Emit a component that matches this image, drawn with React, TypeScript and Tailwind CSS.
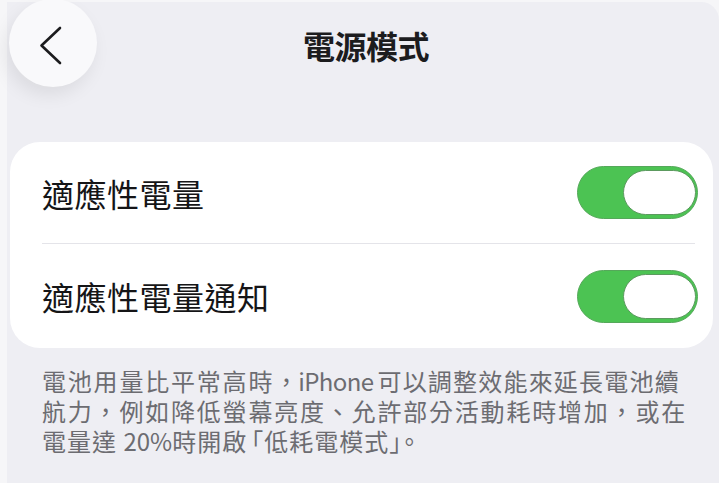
import React from "react";

const Toggle = () => {
  return (
    <div className="w-[121px] h-[53px] rounded-full bg-[#4cc353] border border-[#55a85a] flex items-center justify-end pr-[1px]">
      <div className="w-[73px] h-[45px] rounded-full bg-white border-[1.5px] border-[#5c9a5f]" />
    </div>
  );
};

const Row = ({ label, tall }: { label: string; tall?: boolean }) => {
  return (
    <div
      className={`flex items-center justify-between pl-[32px] pr-[15px] ${
        tall ? "h-[104px]" : "h-[101px]"
      }`}
    >
      <span className="text-[32px] leading-none text-[#151517] tracking-[0.5px]">{label}</span>
      <Toggle />
    </div>
  );
};

const App = () => {
  return (
    <div
      className="w-[719px] h-[483px] bg-[#f6f6f8] overflow-hidden"
      style={{ fontFamily: '"Noto Sans CJK TC", "Noto Sans", sans-serif' }}
    >
      <div className="ml-[7px] mt-[2px] h-[481px] bg-[#eeeef3] rounded-tr-[18px] relative">
        {/* back button sits over the header */}
        <div className="absolute left-[2px] top-[-3px] w-[88px] h-[88px] rounded-full bg-[#f9f9fb] shadow-[-4px_8px_18px_rgba(0,0,0,0.08)] flex items-center justify-center">
          <svg width="88" height="88" viewBox="0 0 88 88" fill="none">
            <path
              d="M51 29 L32.5 46.5 L51 64"
              stroke="#1c1c1e"
              strokeWidth="2.6"
              strokeLinecap="round"
              strokeLinejoin="round"
            />
          </svg>
        </div>

        <header className="h-[86px] flex items-center justify-center pl-[6px]">
          <h1 className="text-[32px] font-bold text-[#1c1c1e] tracking-[-0.5px] leading-none">電源模式</h1>
        </header>

        <section className="mt-[54px] ml-[3px] mr-[6px] bg-white rounded-[30px]">
          <Row label="適應性電量" />
          <div className="ml-[32px] mr-[18px] h-px bg-[#e4e4e9]" />
          <Row label="適應性電量通知" tall />
        </section>

        <p className="mt-[18px] pl-[35px] text-[24px] leading-[30px] text-[#6c6c71] tracking-[1.8px]">
          <span className="block whitespace-nowrap">
            電池用量比平常高時<span className="tracking-[-4px]">，</span>
            <span className="tracking-[-0.6px] mx-[4px]">iPhone</span>
            <span className="tracking-[1.2px]">可以調整效能來延長電池續</span>
          </span>
          <span className="block whitespace-nowrap">航力，例如降低螢幕亮度、允許部分活動耗時增加，或在</span>
          <span className="block whitespace-nowrap tracking-[1px]">
            電量達 <span className="tracking-[0px]">20%</span>時開啟<span className="ml-[-8px]">「</span>
            低耗電模式<span className="tracking-[-4px]">」</span>。
          </span>
        </p>
      </div>
    </div>
  );
};

export default App;
